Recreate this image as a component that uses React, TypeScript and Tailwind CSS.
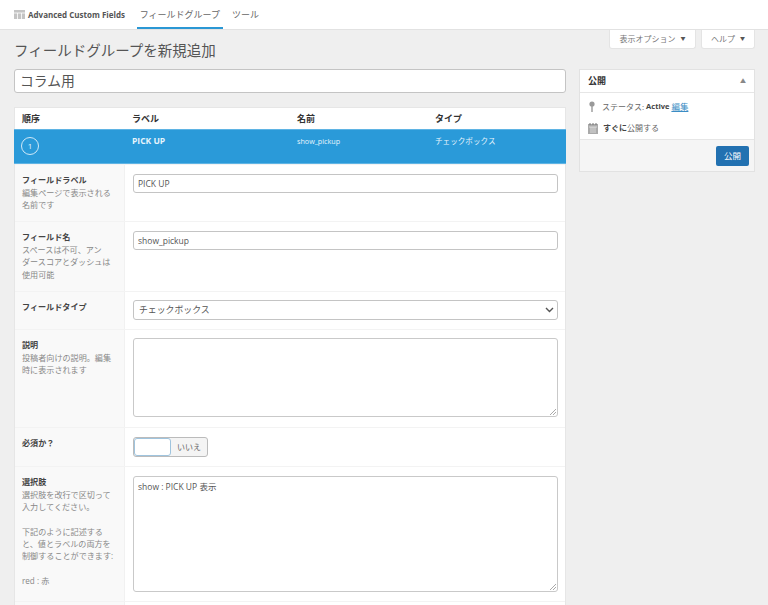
import React from "react";

const font = { fontFamily: '"Open Sans", "Noto Sans CJK JP", sans-serif' };

interface iRow {
  label: string;
  desc?: React.ReactNode;
  height: string;
  children: React.ReactNode;
}

function Row({ label, desc, height, children }: iRow) {
  return (
    <div className={`flex ${height} border-t border-[#f3f3f3]`}>
      <div className="w-[110px] shrink-0 bg-[#f9f9f9] border-r border-[#f1f1f1] pl-[7px] pt-[8px]">
        <div className="text-[8.1px] leading-[13px] font-bold text-[#444]">{label}</div>
        {desc && <div className="text-[8.1px] leading-[12.25px] text-[#888] mt-[1px]">{desc}</div>}
      </div>
      <div className="flex-1 pl-2 pr-[7px] pt-[9px]">{children}</div>
    </div>
  );
}

function TextBox({ value }: { value: string }) {
  return (
    <div className="h-[19px] bg-white border border-[#c4c4c4] rounded-[3px] px-[4px] text-[8.5px] leading-[17px] text-[#555]">
      {value}
    </div>
  );
}

function AreaBox({ height, value }: { height: string; value?: string }) {
  return (
    <div className={`relative ${height} bg-white border border-[#c9c9c9] rounded-[3px] px-[4px] pt-[3px] text-[8.5px] leading-[13px] text-[#555]`}>
      {value}
      <svg className="absolute right-[1px] bottom-[1px]" width="7" height="7" viewBox="0 0 7 7">
        <path d="M1 7L7 1M4 7L7 4" stroke="#aaa" strokeWidth="1" />
      </svg>
    </div>
  );
}

export default function App() {
  return (
    <div style={font} className="w-[768px] h-[605px] overflow-hidden bg-[#efefef] text-[#444]">
      <div className="h-[30px] bg-white border-b border-[#e2e2e2] flex pl-[14px]">
        <div className="flex items-center">
          <svg width="11" height="9" viewBox="0 0 11 9" className="mr-[3px]">
            <rect width="11" height="9" fill="#c4c4c4" />
            <path d="M0 3H11M3.5 3V9M7.5 3V9" stroke="#fff" strokeWidth="0.8" />
          </svg>
          <span className="text-[8px] font-bold text-[#555]">Advanced Custom Fields</span>
        </div>
        <div className="ml-[12px] w-[86px] h-[29px] border-b-2 border-[#2a97d4] text-[9px] leading-[29px] text-center text-[#666]">
          フィールドグループ
        </div>
        <div className="ml-[9px] text-[9px] leading-[29px] text-[#666]">ツール</div>
      </div>

      <div className="flex justify-end gap-[5px] pr-[13px] h-[19px]">
        <div className="w-[87px] bg-white border border-t-0 border-[#e4e4e4] rounded-b-[3px] flex items-center justify-center gap-[5px] text-[8px] text-[#777]">
          表示オプション<span className="text-[5px] text-[#555]">▼</span>
        </div>
        <div className="w-[54px] bg-white border border-t-0 border-[#e4e4e4] rounded-b-[3px] flex items-center justify-center gap-[5px] text-[8px] text-[#777]">
          ヘルプ<span className="text-[5px] text-[#555]">▼</span>
        </div>
      </div>

      <h1 className="pl-[14px] h-[20px] -mt-[8px] text-[14.5px] leading-[20px] font-normal text-[#555]">
        フィールドグループを新規追加
      </h1>

      <div className="flex pl-[14px] pr-[13px] gap-[13px] mt-[8px]">
        <div className="w-[552px] shrink-0">
          <div className="h-[24px] bg-white border border-[#c4c4c4] rounded-[3px] px-[5px] text-[13.8px] leading-[22px] text-[#555]">
            コラム用
          </div>
          <div className="mt-[14px] bg-white border border-[#e6e6e6] border-b-0">
            <div className="grid grid-cols-[110px_165px_138px_1fr] h-[21px] pl-[7px] text-[9px] font-bold leading-[22px] text-[#333]">
              <div>順序</div>
              <div>ラベル</div>
              <div>名前</div>
              <div>タイプ</div>
            </div>
            <div className="-mx-px bg-[#2a9ad9] border-y border-[#5fb4e4] h-[35px] pl-[8px] grid grid-cols-[110px_165px_138px_1fr] text-[#e6f4fc]">
              <div className="pt-[7px] -ml-px">
                <div className="w-[18px] h-[18px] rounded-full border border-[#cfe9f8] text-[8px] leading-[16px] text-center">1</div>
              </div>
              <div className="text-[8.5px] font-bold leading-[22px]">PICK UP</div>
              <div className="text-[7.2px] leading-[22px]">show_pickup</div>
              <div className="text-[7.6px] leading-[22px]">チェックボックス</div>
            </div>
            <Row label="フィールドラベル" desc={<>編集ページで表示される<br />名前です</>} height="h-[57px]">
              <TextBox value="PICK UP" />
            </Row>
            <Row label="フィールド名" desc={<>スペースは不可、アン<br />ダースコアとダッシュは<br />使用可能</>} height="h-[70px]">
              <TextBox value="show_pickup" />
            </Row>
            <Row label="フィールドタイプ" height="h-[38px]">
              <div className="-mt-px flex items-center justify-between h-[20px] bg-white border border-[#c4c4c4] rounded-[3px] pl-[5px] pr-[3px] text-[8.9px] text-[#555]">
                チェックボックス
                <svg width="9" height="6" viewBox="0 0 9 6">
                  <path d="M1 1L4.5 4.5L8 1" fill="none" stroke="#555" strokeWidth="1.4" />
                </svg>
              </div>
            </Row>
            <Row label="説明" desc={<>投稿者向けの説明。編集<br />時に表示されます</>} height="h-[98px]">
              <div className="-mt-px">
                <AreaBox height="h-[79px]" />
              </div>
            </Row>
            <Row label="必須か？" height="h-[39px]">
              <div className="flex w-[75px] h-[20px] bg-[#f4f4f4] border border-[#bbb] rounded-[3px]">
                <div className="w-[37px] bg-white border border-[#9fc4de] rounded-[3px]" />
                <div className="flex-1 text-center text-[8px] leading-[18px] text-[#666]">いいえ</div>
              </div>
            </Row>
            <Row label="選択肢" desc={<>選択肢を改行で区切って<br />入力してください。<br /><br />下記のように記述する<br />と、値とラベルの両方を<br />制御することができます:<br /><br />red : 赤</>} height="h-[135px]">
              <AreaBox height="h-[116px]" value="show : PICK UP 表示" />
            </Row>
            <Row label="" height="h-[20px]"><div /></Row>
          </div>
        </div>

        <div className="w-[176px] h-[103px] bg-white border border-[#e2e2e2]">
          <div className="flex items-center justify-between h-[23px] border-b border-[#e6e6e6] px-2 text-[9px] font-bold text-[#333]">
            公開
            <span className="text-[6px] text-[#888]">▲</span>
          </div>
          <div className="h-[46px] px-2 pt-[7px] text-[8px] text-[#666]">
            <div className="flex items-center h-[14px]">
              <svg width="6" height="11" viewBox="0 0 6 11" className="ml-[1px] mr-[7px] -mt-[2px]">
                <circle cx="3" cy="3" r="2.6" fill="#999" />
                <rect x="2.3" y="4" width="1.4" height="7" fill="#999" />
              </svg>
              ステータス: <b className="ml-[2px] text-[7.5px] text-[#444]">Active</b>
              <span className="ml-[2px] text-[8.5px] text-[#3b8cc4] underline">編集</span>
            </div>
            <div className="flex items-center h-[14px] mt-[7px]">
              <svg width="10" height="11" viewBox="0 0 10 11" className="mr-[5px]">
                <rect y="1" width="10" height="10" fill="#aaa" />
                <path d="M2 0V2M5 0V2M8 0V2" stroke="#777" />
                <path d="M1 4H9M3 4V10M5 4V10M7 4V10" stroke="#eee" strokeWidth="0.7" />
              </svg>
              <b className="text-[#444]">すぐに</b>公開する
            </div>
          </div>
          <div className="h-[32px] bg-[#f5f5f5] border-t border-[#e6e6e6] flex justify-end items-start pt-[6px] pr-[5px]">
            <div className="w-[33px] h-[20px] bg-[#2271b1] rounded-[2px] text-center text-[8.5px] leading-[20px] text-white">公開</div>
          </div>
        </div>
      </div>
    </div>
  );
}
